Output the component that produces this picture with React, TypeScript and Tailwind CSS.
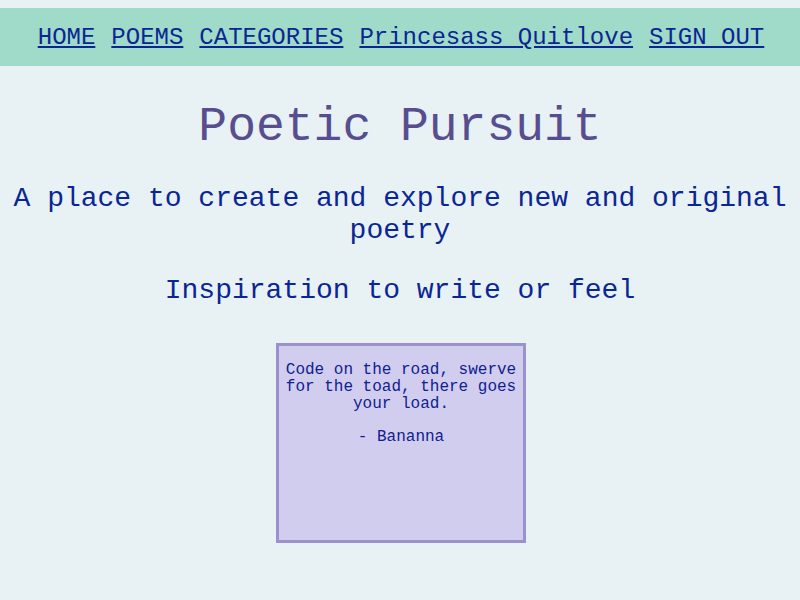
const navLinks = ["HOME", "POEMS", "CATEGORIES", "Princesass Quitlove", "SIGN OUT"];

export default function App() {
  return (
    <div className="min-h-screen bg-[#e8f1f4] pt-2 font-['Courier_New','Liberation_Mono',monospace]">
      <nav className="flex justify-center gap-4 bg-[#a0dac8] pt-4 pb-[15px] pl-[2px] text-[24px] leading-[27px]">
        {navLinks.map((link) => (
          <a key={link} href="#" className="text-[#0a2694] underline">
            {link}
          </a>
        ))}
      </nav>

      <h1 className="mt-[34px] text-center text-[48px] leading-[54px] text-[#574d8f]">
        Poetic Pursuit
      </h1>
      <h2 className="mx-auto mt-[29px] max-w-[790px] text-center text-[28px] leading-[32px] text-[#0a2694]">
        A place to create and explore new and original poetry
      </h2>
      <h3 className="mt-[28px] text-center text-[28px] leading-[32px] text-[#0a2694]">
        Inspiration to write or feel
      </h3>

      <div className="mx-auto mt-[36px] h-[200px] w-[250px] translate-x-[1px] border-[3px] border-[#9b91cd] bg-[#d1cdee] px-1 text-center text-[16px] leading-[17px] text-[#102090]">
        <p className="mt-4">
          Code on the road, swerve for the toad, there goes your load.
        </p>
        <p className="mt-4">- Bananna</p>
      </div>
    </div>
  );
}
